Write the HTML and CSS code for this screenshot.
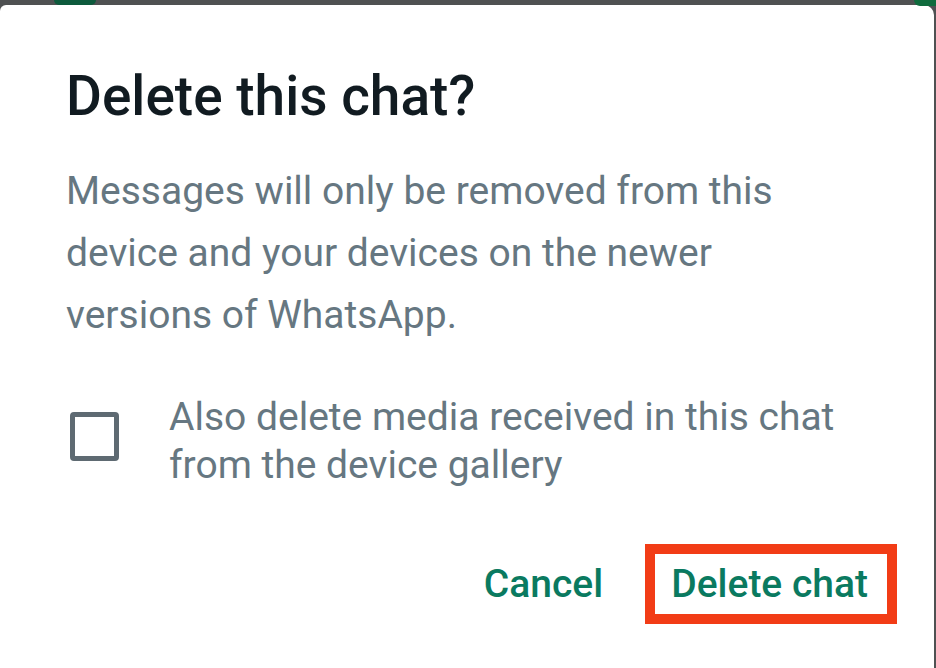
FILE: index.html
```html
<!DOCTYPE html>
<html lang="en">
<head>
    <meta charset="UTF-8">
    <meta name="viewport" content="width=device-width, initial-scale=1.0">
    <title>Delete this chat?</title>
    <link rel="stylesheet" href="styles.css">
</head>
<body>
    <!-- Strip of the chat screen behind the dialog -->
    <div class="backdrop">
        <span class="avatar-edge"></span>
        <span class="corner-edge"></span>
    </div>

    <div class="dialog">
        <h2 class="dialog-title">Delete this chat?</h2>
        <p class="dialog-text">Messages will only be removed from this device and your devices on the newer versions of WhatsApp.</p>

        <label class="media-option">
            <span class="checkbox"></span>
            <span class="option-text">Also delete media received in this chat from the device gallery</span>
        </label>

        <div class="dialog-actions">
            <button class="action-button">Cancel</button>
            <button class="action-button highlighted">Delete chat</button>
        </div>
    </div>
</body>
</html>
```

FILE: styles.css
```css
body {
    margin: 0;
    background-color: #4f5152;
    font-family: Roboto, "Noto Sans", Arial, sans-serif;
    height: 668px;
    overflow: hidden;
}

.backdrop {
    height: 5px;
    display: flex;
    justify-content: space-between;
}

.avatar-edge {
    width: 42px;
    height: 5px;
    margin-left: 54px;
    background-color: #0d5a3c;
    border-radius: 0 0 20px 20px;
}

.corner-edge {
    width: 22px;
    height: 6px;
    background-color: #0f6b3d;
    border-radius: 0 0 0 16px;
}

.dialog {
    background-color: #fff;
    width: 934px;
    height: 663px;
    border-top-left-radius: 6px;
    border-top-right-radius: 10px;
    box-sizing: border-box;
    padding: 59px 0 0 66px;
}

.dialog-title {
    margin: 0;
    font-size: 55px;
    font-weight: 500;
    line-height: 64px;
    color: #111b21;
}

.dialog-text {
    margin: 32px 0 0;
    width: 760px;
    font-size: 39px;
    line-height: 62px;
    color: #667781;
}

.media-option {
    display: flex;
    align-items: flex-start;
    margin-top: 47px;
}

.checkbox {
    flex: none;
    width: 39px;
    height: 39px;
    border: 5px solid #5e6a72;
    border-radius: 4px;
    margin: 19px 50px 0 4px;
}

.option-text {
    width: 700px;
    font-size: 39px;
    line-height: 48px;
    color: #667781;
}

.dialog-actions {
    display: flex;
    justify-content: flex-end;
    align-items: center;
    gap: 42px;
    margin-top: 55px;
    padding-right: 37px;
}

.action-button {
    background: none;
    border: none;
    padding: 0;
    font-family: inherit;
    font-size: 39px;
    font-weight: 500;
    line-height: 46px;
    color: #0a7a60;
    cursor: pointer;
}

.highlighted {
    border: 10px solid #f23c16;
    padding: 7px 19px 7px 16px;
}
```
